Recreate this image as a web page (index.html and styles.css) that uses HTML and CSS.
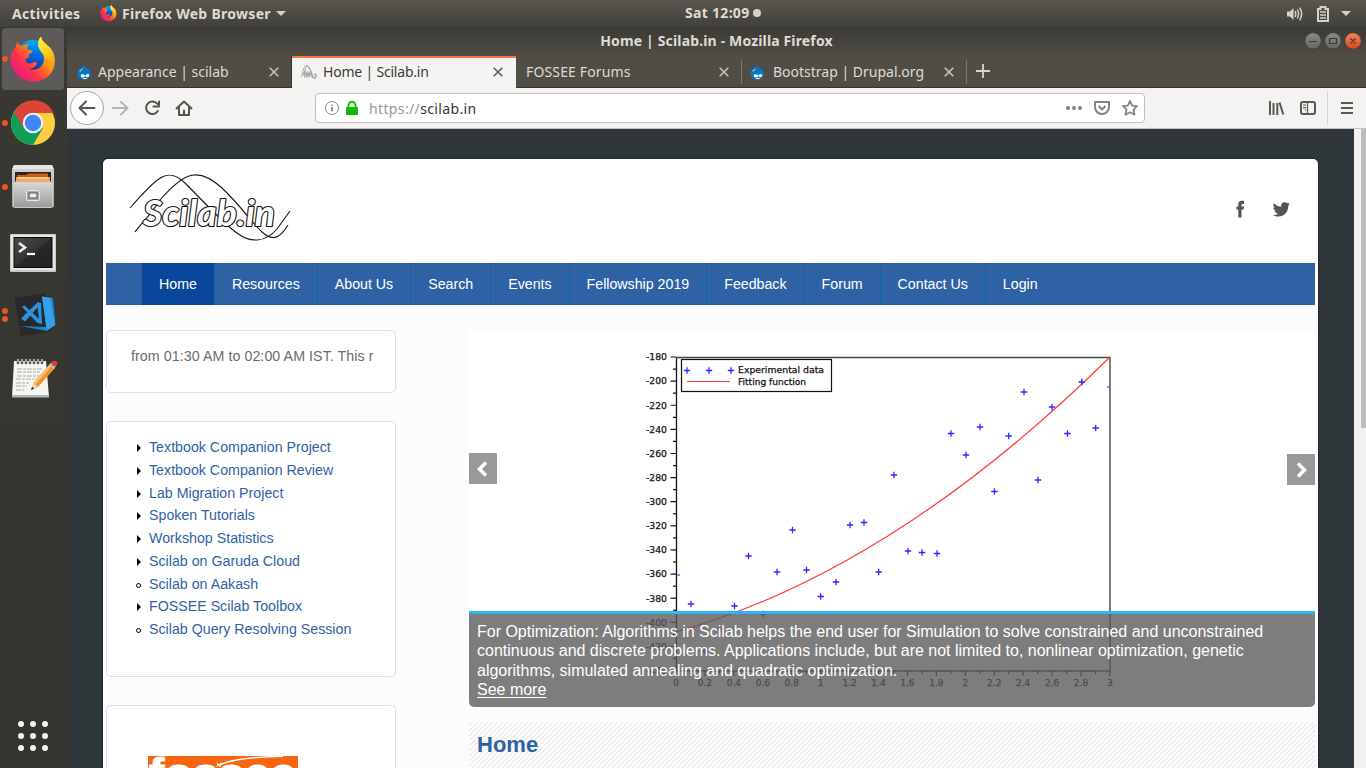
FILE: index.html
```html
<!DOCTYPE html>
<html lang="en">
<head>
<meta charset="utf-8">
<title>Home | Scilab.in</title>
<link rel="stylesheet" href="styles.css">
</head>
<body>
<svg class="defs" width="0" height="0">
  <defs>
    <linearGradient id="ffBody" x1="0.9" y1="0.1" x2="0.1" y2="0.9"><stop offset="0" stop-color="#ffe226"/><stop offset=".35" stop-color="#ff980e"/><stop offset=".65" stop-color="#ff3647"/><stop offset="1" stop-color="#e31587"/></linearGradient>
    <linearGradient id="ffGlobe" x1="0.6" y1="0" x2="0.4" y2="1"><stop offset="0" stop-color="#00b3f4"/><stop offset=".5" stop-color="#0060df"/><stop offset="1" stop-color="#321c64"/></linearGradient>
    <linearGradient id="ffTail" x1="0" y1="0" x2="0.4" y2="1"><stop offset="0" stop-color="#fff44f"/><stop offset=".5" stop-color="#ffd32a"/><stop offset="1" stop-color="#ff9a0c"/></linearGradient>
    <linearGradient id="steel" x1="0" y1="0" x2="0" y2="1"><stop offset="0" stop-color="#d8d8d8"/><stop offset="1" stop-color="#9a9a9a"/></linearGradient>
    <linearGradient id="screen" x1="0" y1="0" x2="1" y2="1"><stop offset="0" stop-color="#4c4c4c"/><stop offset=".5" stop-color="#333"/><stop offset=".5" stop-color="#292929"/><stop offset="1" stop-color="#202020"/></linearGradient>
    <linearGradient id="knob" x1="0" y1="0" x2="0" y2="1"><stop offset="0" stop-color="#8b8a84"/><stop offset="1" stop-color="#65645e"/></linearGradient>
    <linearGradient id="knobClose" x1="0" y1="0" x2="0" y2="1"><stop offset="0" stop-color="#f4845f"/><stop offset="1" stop-color="#dd4814"/></linearGradient>
    <symbol id="firefox" viewBox="10 9 46 47">
      <circle cx="33" cy="29" r="17" fill="url(#ffGlobe)"/>
      <path d="M17 13.500C18 16 19.500 17.500 22 18C24 16.500 27 16 29.500 16.200C27.500 17.500 26.500 20 27.500 21.500L32 22.500C33.500 23.500 30.500 25.500 28.500 26.500L29 30C27.500 29.500 26 30 25.500 31.500C25.500 35 29 36.500 32 35C34.500 33.500 36 33.500 37 35C36 39.500 31 41.500 27.500 40.500C35 44 43 40 44 32C44 28 43 25 40.500 22C37 18 37.500 13 41 8.500C41.500 14 47 16 51 21C56.500 28 56 40 50 46.500C41 56 26 56 17.500 47.500C8 38 9 25 16 18.500Z" fill="url(#ffBody)"/>
      <path d="M41 8.500C41.500 14 47 16 51 21C56 28 55 39 49.500 44C53 36 45.500 29 40.500 23C37 18 37.500 13 41 8.500Z" fill="url(#ffTail)"/>
    </symbol>
    <symbol id="drupal" viewBox="0 0 14 15">
      <path d="M7 0C7.600 1.500 9 2.200 10.500 3.200C12.500 4.500 13.700 6.300 13.700 8.500C13.700 12.300 10.700 14.600 7 14.600S.3 12.200.3 8.400C.3 6 1.800 4.300 3.700 3.200C5.200 2.300 6.500 1.500 7 0Z" fill="#0678be"/>
      <path d="M2 6Q4 5.500 6 2.500Q5.500 5 3.200 6.600Z" fill="#cfe9f7"/>
      <path d="M3.700 10.500C4 8.700 6.500 8.900 8.200 10.500C9.600 9.300 11 8.300 12 9.500C12.600 11 11.500 12.600 10.300 12.300L8.400 11.200C6.800 12.700 3.600 13.300 3.700 10.500Z" fill="#fff"/><path d="M6 13.200Q8 14.200 9.800 13.200" stroke="#fff" fill="none"/>
    </symbol>
    <symbol id="close" viewBox="0 0 10 10"><path d="M.7.7L9.300 9.300M9.300.7L.7 9.300" stroke="currentColor" stroke-width="1.500"/></symbol>
  </defs>
</svg>

<header class="topbar">
  <span class="activities">Activities</span>
  <svg class="top-ff" width="17" height="17"><use href="#firefox"/></svg>
  <span class="app-name">Firefox Web Browser</span>
  <i class="caret"></i>
  <span class="clock">Sat 12:09</span><i class="clock-dot"></i>
  <div class="tray">
    <svg width="16" height="14" viewBox="0 0 16 14" fill="none" stroke="#d3d1cb" stroke-width="1.500"><path d="M0 4.500H3L6.500 1V13L3 9.500H0Z" fill="#d3d1cb" stroke="none"/><path d="M8 4Q9.500 7 8 10M10.300 2.500Q12.800 7 10.300 11.500M12.700.7Q16.500 7 12.700 13.300"/></svg>
    <svg class="battery" width="12" height="16" viewBox="0 0 12 16" fill="none" stroke="#d3d1cb" stroke-width="2"><path d="M1 3H3.500V1H8.500V3H11V15H1Z"/><path d="M3 6H9M3 9H9M3 12H9" stroke-width="1.500"/></svg>
    <i class="caret"></i>
  </div>
</header>

<div class="desktop">
  <nav class="dock">
    <div class="dock-item active one">
      <svg width="67" height="64" viewBox="0 0 67 64"><use href="#firefox" x="10" y="10" width="46" height="47"/></svg>
    </div>
    <div class="dock-item one">
      <svg width="67" height="64" viewBox="0 0 67 64"><circle cx="33" cy="32" r="22" fill="#ffcd40"/><path d="M33 32L14 21A22 22 0 0 0 33 54L43 37Z" fill="#0f9d58"/><path d="M33 32L14 21A22 22 0 0 1 53.500 22H33Z" fill="#db4437"/><path d="M14 21L23.500 37L26 25Z" fill="#db4437"/><circle cx="33" cy="32" r="10.300" fill="#f1f1f1"/><circle cx="33" cy="32" r="8.200" fill="#4285f4"/></svg>
    </div>
    <div class="dock-item one">
      <svg width="67" height="64" viewBox="0 0 67 64"><path d="M14 10H52L54 15V52H12V15Z" fill="url(#steel)"/><path d="M12 14H54L52 10H14Z" fill="#e8e8e8"/><rect x="15" y="17" width="36" height="11" fill="#262626"/><path d="M17 20H26L28 18.500H48V28H17Z" fill="#d45a16"/><path d="M16 22H50V28H16Z" fill="#f5a453"/><path d="M18 23H48" stroke="#fff4d8"/><rect x="13.500" y="27" width="39" height="25.500" rx="1" fill="url(#steel)" stroke="#c9c9c9"/><rect x="26.500" y="35.500" width="13" height="10" rx="1" fill="#aaa" stroke="#e8e8e8"/><rect x="29" y="38" width="8" height="5" fill="#eee" stroke="#555"/></svg>
    </div>
    <div class="dock-item">
      <svg width="67" height="64" viewBox="0 0 67 64"><rect x="10" y="15" width="46" height="38" rx="1" fill="#c9c9c9"/><rect x="11" y="16" width="44" height="35" fill="#e6e6e6"/><rect x="14" y="18.500" width="38" height="30" fill="url(#screen)" stroke="#090909"/><path d="M19 24L25 28.500L19 33" fill="none" stroke="#eee" stroke-width="2.500"/><path d="M27 35H35" stroke="#fff" stroke-width="2.200"/></svg>
    </div>
    <div class="dock-item two">
      <svg width="67" height="64" viewBox="0 0 67 64"><path d="M14.500 15L45 10L52 48L21 53Z" fill="#29292d"/><path d="M42 13.500L53 15L55.500 42L47 48L20 43L46 44Z" fill="#1684d0"/><path d="M42 13.500L50.500 15L55 42L47 47Z" fill="#36a0e8"/><path d="M37 19L41 20L42 41L37.500 40L22 24L24.500 22.500L39 36ZM37 20L40.500 21L25 38.500L21 35.500Z" fill="#2b92dc"/></svg>
    </div>
    <div class="dock-item">
      <svg width="67" height="64" viewBox="0 0 67 64"><path d="M14 14H46L49 50H12Z" fill="#f5f5f2"/><path d="M12 48H49V50.500H12Z" fill="#b6b6b1"/><path d="M18 13V16M22 13V16M26 13V16M30 13V16M34 13V16M38 13V16M42 13V16" stroke="#555" stroke-width="2.600" stroke-linecap="round"/><path d="M18 12V15M22 12V15M26 12V15M30 12V15M34 12V15M38 12V15M42 12V15" stroke="#eee"/><path d="M17 22H43M17 25H40M17 29H43M16 32H39M16 36H29M16 39H27M16 43H24" stroke="#aaa" stroke-dasharray="5 1 3 1"/><path d="M31.500 42.500L33.500 36L50 17L55 21L38 40Z" fill="#ef9434"/><path d="M33.500 36L50 17L52 18.500L35 38Z" fill="#ffc164"/><path d="M31.500 42.500L33.500 36L38 40Z" fill="#efd5ad"/><path d="M31 43L32 40L34 41.500Z" fill="#111"/><path d="M49 18L52 15L56 19L54 22Z" fill="#b5bdc3"/><circle cx="54.500" cy="16.500" r="2.800" fill="#e23b3e"/></svg>
    </div>
    <div class="apps"><i></i><i></i><i></i><i></i><i></i><i></i><i></i><i></i><i></i></div>
  </nav>

  <main class="window">
    <div class="titlebar"><span class="win-title">Home | Scilab.in - Mozilla Firefox</span>
      <svg class="win-buttons" width="60" height="18" viewBox="0 0 60 18"><g stroke="#343430" stroke-width=".6"><circle cx="10" cy="9" r="8.200" fill="url(#knob)"/><circle cx="30" cy="9" r="8.200" fill="url(#knob)"/><circle cx="50" cy="9" r="8.200" fill="url(#knobClose)"/></g><path d="M6 9.500H14M26.500 6.500H33.500V11.500H26.500ZM47.500 6.500L52.500 11.500M52.500 6.500L47.500 11.500" fill="none" stroke="#3a3935" stroke-width="1.200"/></svg>
    </div>
    <div class="tabs">
      <div class="tab"><svg width="14" height="15"><use href="#drupal"/></svg><span class="t1">Appearance | scilab</span><svg class="x" width="10" height="10"><use href="#close"/></svg></div>
      <div class="tab selected"><svg width="16" height="16" viewBox="0 0 16 16" fill="none" stroke="#aaa"><path d="M.5 13Q3 0 6 1.500T12 13M3 9Q6-3 9 5L12 13"/><path d="M2 11L4 8V12L6 9V12L8 9V12L10 9L11 13L14 14L15.500 11L13 10" stroke-width="1.500"/></svg><span class="t2">Home | Scilab.in</span><svg class="x" width="10" height="10"><use href="#close"/></svg></div>
      <div class="tab plain"><span class="t3">FOSSEE Forums</span><svg class="x" width="10" height="10"><use href="#close"/></svg></div>
      <div class="tab split"><svg width="14" height="15"><use href="#drupal"/></svg><span class="t4">Bootstrap | Drupal.org</span><svg class="x" width="10" height="10"><use href="#close"/></svg></div>
      <svg class="plus" width="14" height="14" viewBox="0 0 14 14"><path d="M7 0V14M0 7H14" stroke="#d9d6cd" stroke-width="1.800"/></svg>
    </div>
    <div class="toolbar">
      <svg class="nav-icons" width="130" height="40" viewBox="67 88 130 40" fill="none" stroke="#56544f" stroke-width="2" stroke-linecap="round" stroke-linejoin="round"><circle cx="87" cy="108" r="16.500" fill="#fdfdfd" stroke="#aaa" stroke-width="1"/><path d="M94.500 108H80M86 101.500L79.500 108L86 114.500"/><path d="M113 108H127M121 102L127.500 108L121 114.500" stroke="#b5b4b1"/><path d="M157.500 104A6.300 6.300 0 1 0 157.800 111M159 101.500V106.500H153.500"/><path d="M176.500 108.500L184 101.500L191.500 108.500M179 107.500V115H189V107.500M184 115V110.500"/></svg>
      <div class="urlbox">
        <svg width="36" height="16" viewBox="0 0 36 16"><circle cx="8" cy="8" r="6.500" fill="none" stroke="#888"/><path d="M8 7V11.500M8 4.500V5.800" stroke="#777" stroke-width="1.600"/><path d="M24.500 8V5.500A3.300 3.500 0 0 1 31.500 5.500V8" fill="none" stroke="#12bc00" stroke-width="2"/><rect x="22" y="7" width="12" height="8" rx="1" fill="#12bc00"/></svg>
        <span class="url"><em>https://</em>scilab.in</span>
        <svg class="url-actions" width="76" height="20" viewBox="1064 98 76 20" fill="none" stroke="#86847f" stroke-width="2" stroke-linejoin="round"><g fill="#86847f" stroke="none"><circle cx="1068" cy="108" r="2"/><circle cx="1074" cy="108" r="2"/><circle cx="1080" cy="108" r="2"/></g><path d="M1095 102H1109V107A7 7 0 0 1 1095 107ZM1098.500 106L1102 109.500L1105.500 106"/><path d="M1130 101L1132.200 105.700L1137 106.200L1133.500 109.700L1134.500 114.700L1130 112.300L1125.500 114.700L1126.500 109.700L1123 106.200L1127.800 105.700Z" stroke-width="1.800"/></svg>
      </div>
      <svg class="tool-icons" width="100" height="40" viewBox="1262 88 100 40" fill="none" stroke="#5b5954" stroke-width="2"><path d="M1270 101V115M1273.500 103V115M1277.300 103V115M1279.500 102.500L1283.300 114.500"/><rect x="1301" y="102" width="14" height="12" rx="2"/><path d="M1307.500 102V114M1303 105H1306M1303 107.700H1306M1305 110.200H1306" stroke-width="1.200"/><path d="M1327.500 91V125" stroke="#d5d4d1" stroke-width="1"/><path d="M1341 103H1353M1341 108H1353M1341 113H1353"/></svg>
    </div>
    <div class="viewport">
      <div class="sheet">
        <div class="banner">
          <svg width="170" height="80" viewBox="125 170 170 80" fill="none" stroke="#151515" stroke-width="1.100">
            <path d="M130 208C157 177 168 166 185 183S225 225 237 233C250 243 265 243 277 229L290 211"/>
            <path d="M135 232C143 221 151 215 160 200C185 171 199 167 222 188C241 206 253 224 262 232C273 242 280 238 288 225"/>
            <text class="logo" x="143" y="226" textLength="132" lengthAdjust="spacingAndGlyphs">Scilab.in</text>
          </svg>
          <div class="social">
            <svg width="9" height="18" viewBox="0 0 9 18"><path d="M2.300 17.500V9.500H.5V6.500H2.300V4.500C2.300 1.500 4 .8 5.500.8H8V4H6.300C5.800 4 5.500 4.300 5.500 5V6.500H8L7.700 9.500H5.500V17.500Z" fill="#555"/></svg>
            <svg width="17" height="15" viewBox="0 0 17 15"><path d="M17 1.800L15.300 3.700C15.300 10 11 14.500 5.500 14.500C3.500 14.500 1.600 14 0 13C2 13.100 3.700 12.600 5 11.500C3.500 11.400 2.200 10.500 1.700 9H3.200C1.500 8.600.4 7.200.4 5.500L2 6C.4 4.800 0 2.800.9 1C2.800 3.200 5.300 4.600 8.200 4.700C7.700 2.200 9.300.2 11.700.2C12.700.2 13.600.6 14.200 1.200L16.400.4L15.100 2.200Z" fill="#555"/></svg>
          </div>
        </div>
        <nav class="menu"><a class="on">Home</a><a>Resources</a><a>About Us</a><a>Search</a><a>Events</a><a>Fellowship 2019</a><a>Feedback</a><a>Forum</a><a>Contact Us</a><a class="last">Login</a></nav>
        <div class="content">
          <aside class="side">
            <section class="card notice"><div class="ticker">from 01:30 AM to 02:00 AM IST. This r</div></section>
            <section class="card links"><ul>
              <li>Textbook Companion Project</li><li>Textbook Companion Review</li><li>Lab Migration Project</li><li>Spoken Tutorials</li><li>Workshop Statistics</li><li>Scilab on Garuda Cloud</li><li class="leaf">Scilab on Aakash</li><li>FOSSEE Scilab Toolbox</li><li class="leaf">Scilab Query Resolving Session</li>
            </ul></section>
            <section class="card sponsor"><svg width="150" height="50" viewBox="0 0 150 50"><rect width="150" height="50" fill="#f76511"/><text class="fossee" x="1" y="31" textLength="147" lengthAdjust="spacingAndGlyphs">fossee</text><path d="M71 9Q89 1 135 .3" fill="none" stroke="#fff" stroke-width="1.400"/><path d="M68 6.500L71 8L74 6.500L72.500 9.500L73 11L70.500 10L68 11L69.500 9Z" fill="#fff"/></svg></section>
          </aside>
          <div class="main">
            <div class="slider">
              <svg id="plot" class="plot" width="846" height="377" viewBox="469 330 846 377"></svg>
              <div class="arrow prev"><svg width="12" height="16" viewBox="0 0 12 16"><path d="M9 1.500L2.500 8L9 14.500" fill="none" stroke="#fff" stroke-width="3.500"/></svg></div>
              <div class="arrow next"><svg width="12" height="16" viewBox="0 0 12 16"><path d="M3 1.500L9.500 8L3 14.500" fill="none" stroke="#fff" stroke-width="3.500"/></svg></div>
              <div class="caption">For Optimization: Algorithms in Scilab helps the end user for Simulation to solve constrained and unconstrained<br>continuous and discrete problems. Applications include, but are not limited to, nonlinear optimization, genetic<br>algorithms, simulated annealing and quadratic optimization.<br><a>See more</a></div>
            </div>
            <h1>Home</h1>
          </div>
        </div>
      </div>
      <div class="scrollbar"><i></i></div>
    </div>
  </main>
</div>
<script src="plot.js"></script>
</body>
</html>
```
FILE: styles.css
```css
* { box-sizing: border-box; }
body { margin: 0; width: 1366px; height: 768px; overflow: hidden; display: flex; flex-direction: column; background: #35332d; font-family: "Liberation Sans", Arial, sans-serif; font-size: 14.22px; }
.defs { position: absolute; }
svg { display: block; flex: none; }
i { display: block; flex: none; }
span { white-space: nowrap; }

.topbar { height: 27px; flex: none; position: relative; display: flex; align-items: center; padding-left: 12px; background: linear-gradient(#59564e, #403f3a); color: #dfdbd2; font: bold 14px "Noto Sans", sans-serif; }
.activities { width: 88px; letter-spacing: .35px; }
.app-name { margin-left: 5px; width: 154px; letter-spacing: .29px; }
.caret { border: 5px solid transparent; border-top-color: #d3d1cb; border-bottom: 0; }
.clock { position: absolute; left: 685px; top: 3px; letter-spacing: .3px; }
.clock-dot { position: absolute; left: 753px; top: 9px; width: 8px; height: 8px; border-radius: 50%; background: #d3d1cb; }
.tray { margin-left: auto; display: flex; align-items: center; padding-right: 15px; }
.battery { margin: 0 12px 0 14px; }

.desktop { flex: 1; min-height: 0; display: flex; }
.dock { width: 67px; flex: none; display: flex; flex-direction: column; background: linear-gradient(#393832, #35332d); }
.dock-item { height: 64px; position: relative; display: flex; }
.dock-item svg { position: relative; }
.active::after { content: ""; position: absolute; left: 2px; top: 1px; width: 62px; height: 62px; background: #5c5b57; border-radius: 4px; }
.active svg { z-index: 1; }
.one::before, .two::before { content: ""; position: absolute; z-index: 2; left: 2px; top: 29px; width: 6px; height: 6px; border-radius: 50%; background: #e95420; }
.two::before { top: 25px; box-shadow: 0 8px #e95420; }
.apps { margin: auto 0 17px 18px; display: grid; grid-template-columns: repeat(3, 6px); gap: 6px; }
.apps i { width: 6px; height: 6px; border-radius: 50%; background: #f2f1ee; }

.window { width: 1299px; display: flex; flex-direction: column; font-family: "Noto Sans", sans-serif; }
.titlebar { height: 29px; flex: none; position: relative; background: linear-gradient(#3a3934, #504d46); color: #dfdbd2; font-size: 14px; font-weight: bold; text-align: center; }
.win-title { display: block; padding-top: 4px; line-height: 20px; letter-spacing: .15px; }
.win-buttons { position: absolute; right: 3px; top: 5px; }
.tabs { height: 32px; flex: none; display: flex; background: #504d46; border-bottom: 1px solid #34332e; color: #dfdbd2; font-size: 14px; }
.tab { width: 225px; height: 32px; flex: none; padding: 0 13px 0 10px; display: flex; align-items: center; gap: 7px; position: relative; }
.tab span { margin-top: -2px; }
.t2 { letter-spacing: -.2px; }
.t3 { letter-spacing: .15px; }
.tab .x { margin-left: auto; color: #c9c6be; }
.selected { background: #f4f3f1; border-top: 2px solid #f07746; color: #3d3c38; gap: 6px; padding-left: 9px; padding-bottom: 2px; box-shadow: -1px 0 #34332e; width: 224px; margin-right: 1px; }
.selected .x { color: #5b5954; }
.plain { padding-left: 9px; }
.split { padding: 0 13px 0 8px; }
.split::before, .split::after { content: ""; position: absolute; left: -1px; top: 4px; width: 1px; height: 24px; background: #7a7871; }
.split::after { left: 224px; }
.split span { margin-left: 2px; }
.plus { margin: 8px 0 0 9px; }
.toolbar { height: 41px; flex: none; display: flex; align-items: center; background: #f4f3f1; border-bottom: 1px solid #c4c3c0; }
.urlbox { width: 830px; height: 30px; margin-left: 118px; display: flex; align-items: center; padding: 0 4px 0 8px; background: #fff; border: 1px solid #c1bfbb; border-radius: 4px; }
.url { margin-left: 9px; color: #35342f; font-size: 14px; letter-spacing: .36px; }
.url em { color: #999; font-style: normal; }
.url-actions { margin-left: auto; }
.tool-icons { margin-left: auto; margin-right: 4px; }

.viewport { flex: 1; min-height: 0; display: flex; padding: 30px 0 0 36px; font-family: "Liberation Sans", Arial, sans-serif; background: repeating-linear-gradient(135deg, #31393c 0 2px, #272d30 2px 2.828px); }
.sheet { width: 1215px; flex: none; background: #fff; border-radius: 5px 5px 0 0; padding: 0 3px; display: flex; flex-direction: column; box-shadow: 0 0 3px #1b2022; }
.banner { height: 104px; flex: none; display: flex; justify-content: space-between; padding: 11px 25px 0 19px; }
.logo { font: italic bold 36px Lato, sans-serif; fill: #fff; stroke: #111; stroke-width: 2.2px; stroke-linejoin: round; paint-order: stroke; }
.social { display: flex; gap: 28px; align-items: center; height: 78px; }
.menu { height: 42px; flex: none; display: flex; padding-left: 36px; background: #2f62a5; color: #fff; line-height: 42px; letter-spacing: -.01px; }
.menu a { padding: 0 17px; border-right: 1px solid #0a6a9b; }
.menu .on { background: #084799; }
.menu .last { border: 0; }
.content { flex: 1; min-height: 0; display: flex; background: #fcfcfc; padding-top: 25px; gap: 73px; }
.side { width: 290px; flex: none; display: flex; flex-direction: column; gap: 28px; min-height: 0; }
.card { background: #fff; border: 1px solid #dfdfdf; border-radius: 5px; flex: none; }
.notice { height: 63px; padding: 14px 21px 0 24px; }
.ticker { overflow: hidden; white-space: nowrap; color: #6c6c6c; line-height: 22.75px; letter-spacing: .07px; }
.links { height: 256px; padding-top: 14px; }
.links ul { margin: 0; padding: 0 0 0 42px; list-style: none; color: #2f62a5; line-height: 22.75px; }
.links li { position: relative; }
.links li::before { content: ""; position: absolute; left: -12px; top: 8px; border: 4px solid transparent; border-left-color: #000; border-right: 0; }
.links .leaf::before { top: 10px; left: -13px; width: 5px; height: 5px; border: 1px solid #000; border-radius: 50%; box-sizing: border-box; }
.sponsor { flex: 1 1 0; min-height: 0; border-bottom: 0; border-radius: 5px 5px 0 0; overflow: hidden; padding: 50px 0 0 41px; }
.fossee { font: bold 40px "Liberation Sans", sans-serif; fill: #fff; stroke: #fff; stroke-width: 1px; }
.main { width: 846px; flex: none; min-height: 0; display: flex; flex-direction: column; }
.slider { height: 377px; flex: none; position: relative; background: #fff; border-radius: 0 0 5px 5px; overflow: hidden; }
.plot text { font-family: "DejaVu Sans", sans-serif; font-size: 9px; fill: #111; stroke: #111; stroke-width: .25px; }
.arrow { position: absolute; width: 28px; height: 31px; display: flex; align-items: center; justify-content: center; background: #999; }
.prev { left: 0; top: 123px; }
.next { right: 0; top: 124px; }
.caption { position: absolute; left: 0; right: 0; bottom: 0; height: 96px; padding: 8px; border-top: 3px solid #33b5f5; background: rgba(90, 90, 90, .79); color: #fff; font-size: 16px; line-height: 19.3px; white-space: nowrap; letter-spacing: -.008px; }
.caption a { text-decoration: underline; text-underline-offset: 2px; }
.main h1 { margin: 15px 0 0; flex: 1; padding: 0 8px; color: #2f62a5; font-size: 22px; line-height: 46px; background: repeating-linear-gradient(135deg, #fcfcfc 0 2.828px, #e2e2e2 2.828px 3.535px); }
.scrollbar { margin: -30px 0 0 auto; width: 12px; background: #f3f2f0; flex: none; padding-left: 7px; }
.scrollbar i { height: 299px; background: #bcbbb9; }
```
FILE: plot.js
```js
// Draws the experimental-data chart: axes, ticks, legend, samples and fitted curve.
const plot = document.getElementById('plot');
const out = [];
const line = (d, color, width) => out.push(`<path d="${d}" fill="none" stroke="${color}" stroke-width="${width}"/>`);
line('M676.5 357V671', '#111', 1.3);
line('M676 357.500H1110V671H676', '#444', 1.4);
for (let k = 0; k <= 13; k++) {
  const y = 357 + k * 24.12;
  line(`M670.500 ${y}H676`, '#111', 1.2);
  if (k < 13) line(`M673 ${y + 12.06}H676`, '#111', 1.2);
  out.push(`<text x="667" y="${y + 3.3}" text-anchor="end" textLength="21" lengthAdjust="spacingAndGlyphs">-${180 + k * 20}</text>`);
}
for (let k = 0; k <= 15; k++) {
  const x = 676 + k * 28.93;
  line(`M${x} 671V676`, '#111', 1);
  if (k < 15) line(`M${x + 14.5} 671V674`, '#111', 1);
  out.push(`<text x="${x}" y="686" text-anchor="middle">${+(k * 0.2).toFixed(1)}</text>`);
}
line('M676 632Q893 571 1110 357', '#ff3b3b', 1.2);
const samples = [[691,604],[705,651],[720,629],[734.5,606],[748.5,556],[763,614],[777,572],[792.5,530],[806.5,570],[820.7,596.5],[836,582],[850,525],[864,522.5],[878.7,572],[894,475],[908,551],[922,552.5],[937,553.5],[951,433.5],[966,455],[980,427],[994.5,491.500],[1008.7,436],[1024,392],[1038,480],[1052,407],[1067.5,433.5],[1081.7,382],[1095.7,428]];
for (const [x, y] of samples) line(`M${x - 3.2} ${y}H${x + 3.2}M${x} ${y - 3.2}V${y + 3.2}`, '#2a2aff', 1.3);
line('M677 575H680M1107 387H1110', '#2a2aff', 1.2);
out.push('<rect x="681.500" y="359.500" width="150" height="32" fill="#fff" stroke="#111" stroke-width="1.200"/>');
for (const x of [687, 709, 731]) line(`M${x - 3.2} 370.500H${x + 3.2}M${x} 367.300V373.700`, '#2a2aff', 1.3);
line('M687 381.500H730', '#ff3b3b', 1.2);
out.push('<text x="738" y="373" textLength="86" lengthAdjust="spacingAndGlyphs">Experimental data</text>');
out.push('<text x="738" y="385" textLength="68" lengthAdjust="spacingAndGlyphs">Fitting function</text>');
plot.innerHTML = out.join('');
```
